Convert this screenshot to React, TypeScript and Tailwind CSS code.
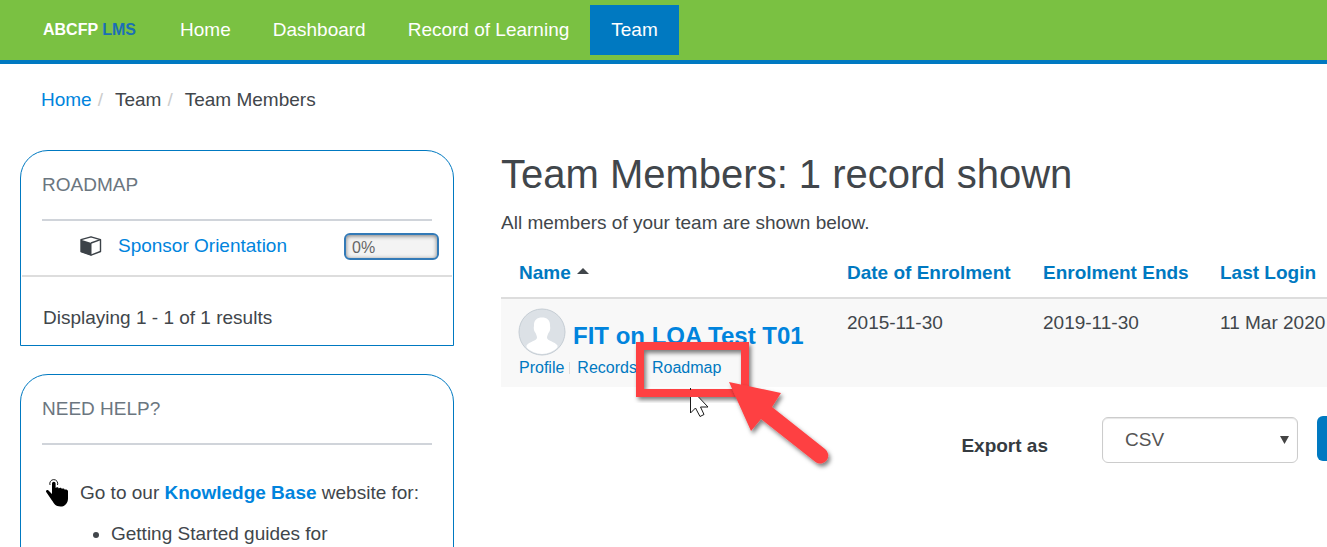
import { ReactNode } from 'react';

const navLinks = [
  { label: 'Home', active: false },
  { label: 'Dashboard', active: false },
  { label: 'Record of Learning', active: false },
  { label: 'Team', active: true },
]

const members = [
  { name: 'FIT on LOA Test T01', enrolled: '2015-11-30', ends: '2019-11-30', lastLogin: '11 Mar 2020' },
]

const CubeIcon = () => (
  <svg className="h-5 w-[22px] shrink-0" viewBox="0 0 22 20" aria-hidden="true">
    <path d="M1 3.700 11 .8 20.500 3.700v11.800L11 19.200 1 15.500z" fill="#fff" stroke="#3c4248" strokeWidth="1.400" strokeLinejoin="round" />
    <path d="M1 3.700 11.500 7v12.500L1 16z" fill="#3c4248" />
    <path d="M11 7 20.500 3.700" stroke="#3c4248" strokeWidth="1.400" />
  </svg>
)

const TapIcon = () => (
  <svg className="h-7 w-6 shrink-0" viewBox="0 0 24 28" aria-hidden="true">
    <path d="M5 6a4 4 0 1 1 7.500 0" fill="none" stroke="#222" strokeWidth="1" />
    <path
      d="M7 4.500a1.800 1.800 0 0 1 3.600 0V9c.6-1.200 3-1 3.200.4.800-1 2.900-.7 3.100.5.700-.8 2.700-.5 2.800.8.800-.5 3.300-.2 3.300 1.500v7.200c0 4-2.500 8.100-7.500 8.100-5 0-6.500-3-8.500-6L1.200 13c-.8-1.500 1-2.700 2.300-1.500L7 15z"
      fill="#000"
    />
  </svg>
)

const Avatar = () => (
  <svg className="h-12 w-12 shrink-0" viewBox="0 0 48 48" aria-hidden="true">
    <clipPath id="face">
      <circle cx="24" cy="24" r="22" />
    </clipPath>
    <circle cx="24" cy="24" r="23" fill="#dce1e6" stroke="#c5cdd4" />
    <path
      clipPath="url(#face)"
      d="M16 17c0-5 3-7.500 8-7.500s8 2.500 8 7.500c0 2 .5 2.500 0 5-.5 2-1.500 2.500-2 4-.5 1.700-1 2.200-1 3.500 0 3.500 8 4 10.500 8V48h-31V37.500c2.500-4 10.500-4.500 10.500-8 0-1.300-.5-1.800-1-3.500-.5-1.500-1.500-2-2-4-.5-2.500 0-3 0-5z"
      fill="#fff"
    />
  </svg>
)

// red frame, arrow and mouse pointer that lie over the Roadmap link
const Callout = () => (
  <svg className="pointer-events-none absolute -left-[22px] -top-5 z-10 h-[150px] w-[220px] max-w-none" viewBox="0 0 220 150" aria-hidden="true">
    <defs>
      <filter id="shadow" x="-20%" y="-20%" width="140%" height="140%">
        <feDropShadow dx="2" dy="3" stdDeviation="2" floodColor="#000" floodOpacity="0.5" />
      </filter>
    </defs>
    <rect x="10" y="10" width="105" height="47" fill="none" stroke="#fe4043" strokeWidth="8" filter="url(#shadow)" />
    <path d="M60.500 61V77l5-5 4.500 8.500 4-2-3.500-7.500h7.500L68.500 61z" fill="#fff" />
    <path d="M60.500 61V77l5-5 4.500 8.500 4-2-3.500-7.500h7.500L68.500 61" fill="none" stroke="#1b1b1b" />
    <path d="M60.500 52v2" stroke="#1b1b1b" />
    <path d="M99 46l52 11-9 14 53 42a7.800 7.800 0 0 1-9.500 13L131 83l-10 12z" fill="#fe4043" filter="url(#shadow)" />
  </svg>
)

const Card = ({ title, children }: { title: string; children: ReactNode }) => (
  <section className="rounded-t-[28px] border border-[#0079c1] pt-5">
    <h2 className="mx-[21px] border-b-2 border-[#d0d4da] pb-5 leading-7 text-[#6b7680]">{title}</h2>
    {children}
  </section>
)

export default function App() {
  return (
    <div className="h-screen overflow-hidden bg-white font-['Liberation_Sans',Arial,sans-serif] text-[19px] leading-7 text-[#41464b]">
      <header className="flex h-16 items-center border-b-4 border-[#0079c1] bg-[#7ac142] pl-[43px]">
        <a href="#" className="mr-[23px] whitespace-nowrap text-base font-bold text-white">
          ABCFP <span className="text-[#1b6fb5]">LMS</span>
        </a>
        <nav className="flex">
          {navLinks.map((link) => (
            <a
              key={link.label}
              href="#"
              className={
                link.active
                  ? 'flex h-[50px] items-center whitespace-nowrap bg-[#0079c1] px-[21px] text-white'
                  : 'flex h-[50px] items-center whitespace-nowrap px-[21px] text-white'
              }
            >
              {link.label}
            </a>
          ))}
        </nav>
      </header>

      <nav aria-label="Breadcrumb" className="px-[41px] pb-9 pt-[22px]">
        <ol className="flex">
          <li><a href="#" className="text-[#0084dd]">Home</a><span className="pl-[6px] pr-3 text-[#ccc]">/</span></li>
          <li>Team<span className="pl-[6px] pr-3 text-[#ccc]">/</span></li>
          <li>Team Members</li>
        </ol>
      </nav>

      <div className="flex gap-[47px] pl-5">
        <aside className="flex w-[434px] shrink-0 flex-col gap-7">
          <Card title="ROADMAP">
            <div className="mx-px flex h-14 items-center border-b-2 border-[#ddd] pb-1 pl-[58px] pr-[13px]">
              <CubeIcon />
              <a href="#" className="ml-4 flex-1 text-[#0084dd]">Sponsor Orientation</a>
              <div
                role="progressbar"
                aria-label="Sponsor Orientation"
                aria-valuenow={0}
                className="h-[27px] w-[95px] rounded-md border-2 border-[#337ab7] bg-[#f3f3f3] px-[6px] text-base leading-[26px] text-[#666] shadow-[inset_0_1px_4px_rgba(0,0,0,0.5)]"
              >
                0%
              </div>
            </div>
            <p className="px-[22px] pb-[13px] pt-[27px]">Displaying 1 - 1 of 1 results</p>
          </Card>
          <Card title="NEED HELP?">
            <div className="px-6 pt-[34px]">
              <p className="flex items-center gap-[11px]">
                <TapIcon />
                <span>
                  Go to our <a href="#" className="font-bold text-[#0084dd]">Knowledge Base</a> website for:
                </span>
              </p>
              <ul className="list-disc pb-5 pl-[66px] pt-[13px]">
                <li>Getting Started guides for</li>
              </ul>
            </div>
          </Card>
        </aside>

        <main className="min-w-0 flex-1 overflow-hidden">
          <h1 className="whitespace-nowrap text-[40px] leading-[48px]">Team Members: 1 record shown</h1>
          <p className="pb-3 pt-[11px]">All members of your team are shown below.</p>

          <table className="w-full whitespace-nowrap text-left">
            <thead className="border-b-2 border-[#ddd] text-[#0079c1]">
              <tr>
                <th className="w-[328px] py-[10px] pl-[18px]">
                  <a href="#" className="flex items-center gap-[6px]">
                    Name
                    <svg className="mb-1 h-[6px] w-3" viewBox="0 0 12 6" aria-hidden="true">
                      <path d="M0 6 6 0l6 6z" fill="#41464b" />
                    </svg>
                  </a>
                </th>
                <th className="w-[196px] pl-[18px]"><a href="#">Date of Enrolment</a></th>
                <th className="w-[177px] pl-[18px]"><a href="#">Enrolment Ends</a></th>
                <th className="pl-[18px]"><a href="#">Last Login</a></th>
              </tr>
            </thead>
            <tbody>
              {members.map((m) => (
                <tr key={m.name} className="bg-[#f8f8f8] align-top">
                  <td className="pb-[7px] pl-[17px] pt-[9px]">
                    <div className="flex items-end gap-[7px]">
                      <Avatar />
                      <a href="#" className="pb-1 text-2xl font-bold leading-8 text-[#0084dd]">{m.name}</a>
                    </div>
                    <div className="flex pl-px text-base leading-6 text-[#0079c1]">
                      <a href="#">Profile</a>
                      <span className="my-[6px] ml-[5px] mr-[7px] w-px bg-[#ddd]" />
                      <a href="#">Records</a>
                      <span className="relative ml-[15px]">
                        <a href="#">Roadmap</a>
                        <Callout />
                      </span>
                    </div>
                  </td>
                  <td className="pl-[18px] pt-[10px]">{m.enrolled}</td>
                  <td className="pl-[18px] pt-[10px]">{m.ends}</td>
                  <td className="pl-[18px] pt-[10px]">{m.lastLogin}</td>
                </tr>
              ))}
            </tbody>
          </table>

          <form className="flex items-start justify-end pt-[29px]">
            <label htmlFor="format" className="mr-[54px] pt-4 font-bold text-[#353b41]">Export as</label>
            <div className="relative mr-[19px] mt-px">
              <select
                id="format"
                className="h-[46px] w-[196px] appearance-none rounded-md border border-[#ccc] bg-white pl-[22px] text-[#555] shadow-[inset_0_1px_1px_rgba(0,0,0,0.1)]"
              >
                <option>CSV</option>
              </select>
              <svg className="pointer-events-none absolute right-[9px] top-[19px] h-2 w-[9px]" viewBox="0 0 9 8" aria-hidden="true">
                <path d="M0 0h9L4.500 8z" fill="#444" />
              </svg>
            </div>
            <button type="button" aria-label="Export" className="-mr-[70px] h-[45px] w-20 shrink-0 rounded-md bg-[#0079c1]" />
          </form>
        </main>
      </div>
    </div>
  )
}
